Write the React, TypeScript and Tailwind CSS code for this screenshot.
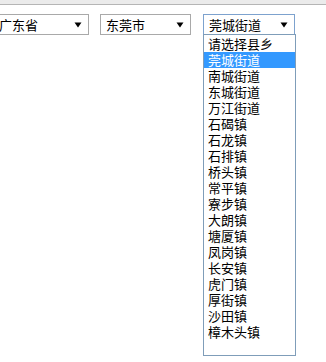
const towns = [
  "请选择县乡",
  "莞城街道",
  "南城街道",
  "东城街道",
  "万江街道",
  "石碣镇",
  "石龙镇",
  "石排镇",
  "桥头镇",
  "常平镇",
  "寮步镇",
  "大朗镇",
  "塘厦镇",
  "凤岗镇",
  "长安镇",
  "虎门镇",
  "厚街镇",
  "沙田镇",
  "樟木头镇",
];

function Arrow() {
  return (
    <svg width="8" height="6" viewBox="0 0 8 6" className="shrink-0">
      <path d="M0.5 0.5 L7.5 0.5 L4 5.5 Z" fill="#000" />
    </svg>
  );
}

function FakeSelect({ label, width, focused }: { label: string; width: string; focused?: boolean }) {
  return (
    <div
      className={`flex h-[21px] items-center justify-between border bg-white pl-[5px] pr-[6px] ${width} ${
        focused ? "border-[#7da2ce]" : "border-[#a9a9a9]"
      }`}
    >
      <span className="text-[13px] leading-[16px] text-black">{label}</span>
      <Arrow />
    </div>
  );
}

export default function App() {
  const selected = 1;

  return (
    <div
      className="relative h-[362px] w-[326px] overflow-hidden bg-white"
      style={{ fontFamily: '"Noto Sans CJK SC", "Liberation Sans", sans-serif' }}
    >
      {/* browser chrome edge */}
      <div className="h-[4px] bg-[#ebebeb]" />
      <div className="h-px bg-[#b5b5b5]" />

      <div className="mt-[9px] flex gap-[11px] -ml-[7px]">
        <FakeSelect label="广东省" width="w-[96px]" />
        <FakeSelect label="东莞市" width="w-[91px]" />
        <div className="relative ml-px">
          <FakeSelect label="莞城街道" width="w-[92px]" focused />

          {/* open dropdown list */}
          <div className="absolute left-0 top-[20px] h-[322px] w-[93px] border border-[#7f9db9] bg-white pt-px">
            {towns.map((t, i) => (
              <div
                key={t}
                className={`h-[16px] pl-[4px] text-[13px] leading-[16px] ${
                  i === selected ? "bg-[#3399ff] text-white" : "text-black"
                }`}
              >
                {t}
              </div>
            ))}
          </div>
        </div>
      </div>
    </div>
  );
}
